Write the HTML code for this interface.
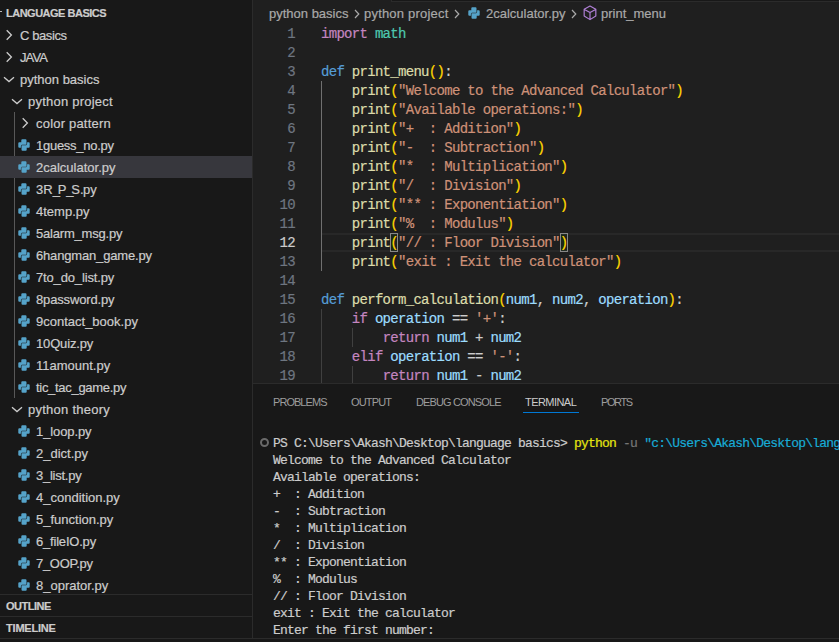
<!DOCTYPE html>
<html><head><meta charset="utf-8"><style>
*{margin:0;padding:0;box-sizing:border-box}
html,body{width:839px;height:642px;overflow:hidden;background:#181818}
body{position:relative;font-family:"Liberation Sans",sans-serif;color:#cccccc;-webkit-text-stroke:0.2px currentColor}
.abs{position:absolute}
#side{position:absolute;left:0;top:0;width:252px;height:638px;background:#181818;overflow:hidden}
#sideb{position:absolute;left:252px;top:0;width:1px;height:638px;background:#2b2b2b}
.hdr{position:absolute;left:6px;font-size:11px;font-weight:700;letter-spacing:-0.5px;line-height:22px;color:#cccccc;white-space:pre}
.row{position:absolute;left:0;width:252px;height:22px}
.row.sel{background:#37373d}
.row .lab{position:absolute;top:1px;font-size:13px;line-height:22px;white-space:pre;color:#cccccc}
.row .ic{position:absolute;width:16px;height:16px}
.pyi{display:block}
.chev{display:block}
.guide{position:absolute;left:14px;top:112px;width:1px;height:286px;background:#585858}
#ed{position:absolute;left:253px;top:0;width:586px;height:383px;background:#1f1f1f;overflow:hidden}
.ln{position:absolute;left:0;width:42px;text-align:right;font-family:"Liberation Mono",monospace;font-size:14px;line-height:19px;color:#6e7681;letter-spacing:-0.7px}
.ln.act{color:#cccccc}
.cl{position:absolute;left:68px;font-family:"Liberation Mono",monospace;font-size:14px;line-height:19px;color:#cccccc;white-space:pre;letter-spacing:-0.7px}
.kw{color:#c586c0} .mod{color:#4ec9b0} .def{color:#569cd6} .fn{color:#dcdcaa} .br{color:#ffd700} .str{color:#ce9178} .var{color:#9cdcfe}
.bc{position:absolute;top:2px;height:22px;font-size:13px;line-height:24px;color:#a9a9a9;white-space:pre}
.bci{position:absolute;top:5px}
#panel{position:absolute;left:253px;top:383px;width:586px;height:255px;background:#181818;border-top:1px solid #2b2b2b;overflow:hidden}
.tab{position:absolute;top:-1px;-webkit-text-stroke:0;font-size:11px;line-height:38px;color:#9d9d9d;white-space:pre}
.tl{position:absolute;left:20px;font-family:"Liberation Mono",monospace;font-size:13px;line-height:17px;color:#cccccc;white-space:pre;letter-spacing:-0.8px}
#bottom{position:absolute;left:0;top:638px;width:839px;height:1px;background:#2b2b2b}
</style></head><body>
<div id="side">
<div class="abs" style="left:0;top:11px;width:2px;height:1px;background:#b8b8b8"></div>
<div class="hdr" style="top:2px">LANGUAGE BASICS</div>
<div class="guide"></div>
<div class="row" style="top:24px"><div class="ic" style="left:1px;top:3px"><svg class="chev" width="16" height="16" viewBox="0 0 16 16"><path d="M5.7 3.3L10.4 8 5.7 12.7" fill="none" stroke="#cccccc" stroke-width="1.3"/></svg></div><div class="lab" style="left:20px;letter-spacing:-0.4px">C basics</div></div>
<div class="row" style="top:46px"><div class="ic" style="left:1px;top:3px"><svg class="chev" width="16" height="16" viewBox="0 0 16 16"><path d="M5.7 3.3L10.4 8 5.7 12.7" fill="none" stroke="#cccccc" stroke-width="1.3"/></svg></div><div class="lab" style="left:20px;letter-spacing:-0.9px">JAVA</div></div>
<div class="row" style="top:68px"><div class="ic" style="left:1px;top:3px"><svg class="chev" width="16" height="16" viewBox="0 0 16 16"><path d="M3 6.2L8 10.6 13 6.2" fill="none" stroke="#cccccc" stroke-width="1.3"/></svg></div><div class="lab" style="left:20px">python basics</div></div>
<div class="row" style="top:90px"><div class="ic" style="left:9px;top:3px"><svg class="chev" width="16" height="16" viewBox="0 0 16 16"><path d="M3 6.2L8 10.6 13 6.2" fill="none" stroke="#cccccc" stroke-width="1.3"/></svg></div><div class="lab" style="left:28px;letter-spacing:0.22px">python project</div></div>
<div class="row" style="top:112px"><div class="ic" style="left:17px;top:3px"><svg class="chev" width="16" height="16" viewBox="0 0 16 16"><path d="M5.7 3.3L10.4 8 5.7 12.7" fill="none" stroke="#cccccc" stroke-width="1.3"/></svg></div><div class="lab" style="left:36px;letter-spacing:0.2px">color pattern</div></div>
<div class="row" style="top:134px"><div class="ic" style="left:18px;top:5px"><svg class="pyi" width="12" height="12" viewBox="0 0 12 12"><g fill="#55a3c9"><path d="M4.3 0.3H7.5Q8.5 0.3 8.5 1.3V5.7H4.1Q2.9 5.7 2.9 6.9V8.7H1.3Q0.3 8.7 0.3 7.7V4.3Q0.3 3.3 1.3 3.3H3.3V1.3Q3.3 0.3 4.3 0.3Z"/><path d="M4.3 0.3H7.5Q8.5 0.3 8.5 1.3V5.7H4.1Q2.9 5.7 2.9 6.9V8.7H1.3Q0.3 8.7 0.3 7.7V4.3Q0.3 3.3 1.3 3.3H3.3V1.3Q3.3 0.3 4.3 0.3Z" transform="rotate(180 6 6)"/></g></svg></div><div class="lab" style="left:36px;letter-spacing:-0.27px">1guess_no.py</div></div>
<div class="row sel" style="top:156px"><div class="ic" style="left:18px;top:5px"><svg class="pyi" width="12" height="12" viewBox="0 0 12 12"><g fill="#55a3c9"><path d="M4.3 0.3H7.5Q8.5 0.3 8.5 1.3V5.7H4.1Q2.9 5.7 2.9 6.9V8.7H1.3Q0.3 8.7 0.3 7.7V4.3Q0.3 3.3 1.3 3.3H3.3V1.3Q3.3 0.3 4.3 0.3Z"/><path d="M4.3 0.3H7.5Q8.5 0.3 8.5 1.3V5.7H4.1Q2.9 5.7 2.9 6.9V8.7H1.3Q0.3 8.7 0.3 7.7V4.3Q0.3 3.3 1.3 3.3H3.3V1.3Q3.3 0.3 4.3 0.3Z" transform="rotate(180 6 6)"/></g></svg></div><div class="lab" style="left:36px">2calculator.py</div></div>
<div class="row" style="top:178px"><div class="ic" style="left:18px;top:5px"><svg class="pyi" width="12" height="12" viewBox="0 0 12 12"><g fill="#55a3c9"><path d="M4.3 0.3H7.5Q8.5 0.3 8.5 1.3V5.7H4.1Q2.9 5.7 2.9 6.9V8.7H1.3Q0.3 8.7 0.3 7.7V4.3Q0.3 3.3 1.3 3.3H3.3V1.3Q3.3 0.3 4.3 0.3Z"/><path d="M4.3 0.3H7.5Q8.5 0.3 8.5 1.3V5.7H4.1Q2.9 5.7 2.9 6.9V8.7H1.3Q0.3 8.7 0.3 7.7V4.3Q0.3 3.3 1.3 3.3H3.3V1.3Q3.3 0.3 4.3 0.3Z" transform="rotate(180 6 6)"/></g></svg></div><div class="lab" style="left:36px">3R<span style="letter-spacing:-2.2px">_</span>P<span style="letter-spacing:-2.2px">_</span>S<span style="letter-spacing:-0.6px">.</span>py</div></div>
<div class="row" style="top:200px"><div class="ic" style="left:18px;top:5px"><svg class="pyi" width="12" height="12" viewBox="0 0 12 12"><g fill="#55a3c9"><path d="M4.3 0.3H7.5Q8.5 0.3 8.5 1.3V5.7H4.1Q2.9 5.7 2.9 6.9V8.7H1.3Q0.3 8.7 0.3 7.7V4.3Q0.3 3.3 1.3 3.3H3.3V1.3Q3.3 0.3 4.3 0.3Z"/><path d="M4.3 0.3H7.5Q8.5 0.3 8.5 1.3V5.7H4.1Q2.9 5.7 2.9 6.9V8.7H1.3Q0.3 8.7 0.3 7.7V4.3Q0.3 3.3 1.3 3.3H3.3V1.3Q3.3 0.3 4.3 0.3Z" transform="rotate(180 6 6)"/></g></svg></div><div class="lab" style="left:36px">4temp.py</div></div>
<div class="row" style="top:222px"><div class="ic" style="left:18px;top:5px"><svg class="pyi" width="12" height="12" viewBox="0 0 12 12"><g fill="#55a3c9"><path d="M4.3 0.3H7.5Q8.5 0.3 8.5 1.3V5.7H4.1Q2.9 5.7 2.9 6.9V8.7H1.3Q0.3 8.7 0.3 7.7V4.3Q0.3 3.3 1.3 3.3H3.3V1.3Q3.3 0.3 4.3 0.3Z"/><path d="M4.3 0.3H7.5Q8.5 0.3 8.5 1.3V5.7H4.1Q2.9 5.7 2.9 6.9V8.7H1.3Q0.3 8.7 0.3 7.7V4.3Q0.3 3.3 1.3 3.3H3.3V1.3Q3.3 0.3 4.3 0.3Z" transform="rotate(180 6 6)"/></g></svg></div><div class="lab" style="left:36px;letter-spacing:-0.2px">5alarm_msg.py</div></div>
<div class="row" style="top:244px"><div class="ic" style="left:18px;top:5px"><svg class="pyi" width="12" height="12" viewBox="0 0 12 12"><g fill="#55a3c9"><path d="M4.3 0.3H7.5Q8.5 0.3 8.5 1.3V5.7H4.1Q2.9 5.7 2.9 6.9V8.7H1.3Q0.3 8.7 0.3 7.7V4.3Q0.3 3.3 1.3 3.3H3.3V1.3Q3.3 0.3 4.3 0.3Z"/><path d="M4.3 0.3H7.5Q8.5 0.3 8.5 1.3V5.7H4.1Q2.9 5.7 2.9 6.9V8.7H1.3Q0.3 8.7 0.3 7.7V4.3Q0.3 3.3 1.3 3.3H3.3V1.3Q3.3 0.3 4.3 0.3Z" transform="rotate(180 6 6)"/></g></svg></div><div class="lab" style="left:36px;letter-spacing:-0.17px">6hangman_game.py</div></div>
<div class="row" style="top:266px"><div class="ic" style="left:18px;top:5px"><svg class="pyi" width="12" height="12" viewBox="0 0 12 12"><g fill="#55a3c9"><path d="M4.3 0.3H7.5Q8.5 0.3 8.5 1.3V5.7H4.1Q2.9 5.7 2.9 6.9V8.7H1.3Q0.3 8.7 0.3 7.7V4.3Q0.3 3.3 1.3 3.3H3.3V1.3Q3.3 0.3 4.3 0.3Z"/><path d="M4.3 0.3H7.5Q8.5 0.3 8.5 1.3V5.7H4.1Q2.9 5.7 2.9 6.9V8.7H1.3Q0.3 8.7 0.3 7.7V4.3Q0.3 3.3 1.3 3.3H3.3V1.3Q3.3 0.3 4.3 0.3Z" transform="rotate(180 6 6)"/></g></svg></div><div class="lab" style="left:36px;letter-spacing:-0.15px">7to_do_list.py</div></div>
<div class="row" style="top:288px"><div class="ic" style="left:18px;top:5px"><svg class="pyi" width="12" height="12" viewBox="0 0 12 12"><g fill="#55a3c9"><path d="M4.3 0.3H7.5Q8.5 0.3 8.5 1.3V5.7H4.1Q2.9 5.7 2.9 6.9V8.7H1.3Q0.3 8.7 0.3 7.7V4.3Q0.3 3.3 1.3 3.3H3.3V1.3Q3.3 0.3 4.3 0.3Z"/><path d="M4.3 0.3H7.5Q8.5 0.3 8.5 1.3V5.7H4.1Q2.9 5.7 2.9 6.9V8.7H1.3Q0.3 8.7 0.3 7.7V4.3Q0.3 3.3 1.3 3.3H3.3V1.3Q3.3 0.3 4.3 0.3Z" transform="rotate(180 6 6)"/></g></svg></div><div class="lab" style="left:36px;letter-spacing:-0.15px">8password.py</div></div>
<div class="row" style="top:310px"><div class="ic" style="left:18px;top:5px"><svg class="pyi" width="12" height="12" viewBox="0 0 12 12"><g fill="#55a3c9"><path d="M4.3 0.3H7.5Q8.5 0.3 8.5 1.3V5.7H4.1Q2.9 5.7 2.9 6.9V8.7H1.3Q0.3 8.7 0.3 7.7V4.3Q0.3 3.3 1.3 3.3H3.3V1.3Q3.3 0.3 4.3 0.3Z"/><path d="M4.3 0.3H7.5Q8.5 0.3 8.5 1.3V5.7H4.1Q2.9 5.7 2.9 6.9V8.7H1.3Q0.3 8.7 0.3 7.7V4.3Q0.3 3.3 1.3 3.3H3.3V1.3Q3.3 0.3 4.3 0.3Z" transform="rotate(180 6 6)"/></g></svg></div><div class="lab" style="left:36px">9contact_book.py</div></div>
<div class="row" style="top:332px"><div class="ic" style="left:18px;top:5px"><svg class="pyi" width="12" height="12" viewBox="0 0 12 12"><g fill="#55a3c9"><path d="M4.3 0.3H7.5Q8.5 0.3 8.5 1.3V5.7H4.1Q2.9 5.7 2.9 6.9V8.7H1.3Q0.3 8.7 0.3 7.7V4.3Q0.3 3.3 1.3 3.3H3.3V1.3Q3.3 0.3 4.3 0.3Z"/><path d="M4.3 0.3H7.5Q8.5 0.3 8.5 1.3V5.7H4.1Q2.9 5.7 2.9 6.9V8.7H1.3Q0.3 8.7 0.3 7.7V4.3Q0.3 3.3 1.3 3.3H3.3V1.3Q3.3 0.3 4.3 0.3Z" transform="rotate(180 6 6)"/></g></svg></div><div class="lab" style="left:36px;letter-spacing:-0.15px">10Quiz.py</div></div>
<div class="row" style="top:354px"><div class="ic" style="left:18px;top:5px"><svg class="pyi" width="12" height="12" viewBox="0 0 12 12"><g fill="#55a3c9"><path d="M4.3 0.3H7.5Q8.5 0.3 8.5 1.3V5.7H4.1Q2.9 5.7 2.9 6.9V8.7H1.3Q0.3 8.7 0.3 7.7V4.3Q0.3 3.3 1.3 3.3H3.3V1.3Q3.3 0.3 4.3 0.3Z"/><path d="M4.3 0.3H7.5Q8.5 0.3 8.5 1.3V5.7H4.1Q2.9 5.7 2.9 6.9V8.7H1.3Q0.3 8.7 0.3 7.7V4.3Q0.3 3.3 1.3 3.3H3.3V1.3Q3.3 0.3 4.3 0.3Z" transform="rotate(180 6 6)"/></g></svg></div><div class="lab" style="left:36px">11amount.py</div></div>
<div class="row" style="top:376px"><div class="ic" style="left:18px;top:5px"><svg class="pyi" width="12" height="12" viewBox="0 0 12 12"><g fill="#55a3c9"><path d="M4.3 0.3H7.5Q8.5 0.3 8.5 1.3V5.7H4.1Q2.9 5.7 2.9 6.9V8.7H1.3Q0.3 8.7 0.3 7.7V4.3Q0.3 3.3 1.3 3.3H3.3V1.3Q3.3 0.3 4.3 0.3Z"/><path d="M4.3 0.3H7.5Q8.5 0.3 8.5 1.3V5.7H4.1Q2.9 5.7 2.9 6.9V8.7H1.3Q0.3 8.7 0.3 7.7V4.3Q0.3 3.3 1.3 3.3H3.3V1.3Q3.3 0.3 4.3 0.3Z" transform="rotate(180 6 6)"/></g></svg></div><div class="lab" style="left:36px;letter-spacing:-0.3px">tic_tac_game.py</div></div>
<div class="row" style="top:398px"><div class="ic" style="left:9px;top:3px"><svg class="chev" width="16" height="16" viewBox="0 0 16 16"><path d="M3 6.2L8 10.6 13 6.2" fill="none" stroke="#cccccc" stroke-width="1.3"/></svg></div><div class="lab" style="left:28px;letter-spacing:0.25px">python theory</div></div>
<div class="row" style="top:420px"><div class="ic" style="left:18px;top:5px"><svg class="pyi" width="12" height="12" viewBox="0 0 12 12"><g fill="#55a3c9"><path d="M4.3 0.3H7.5Q8.5 0.3 8.5 1.3V5.7H4.1Q2.9 5.7 2.9 6.9V8.7H1.3Q0.3 8.7 0.3 7.7V4.3Q0.3 3.3 1.3 3.3H3.3V1.3Q3.3 0.3 4.3 0.3Z"/><path d="M4.3 0.3H7.5Q8.5 0.3 8.5 1.3V5.7H4.1Q2.9 5.7 2.9 6.9V8.7H1.3Q0.3 8.7 0.3 7.7V4.3Q0.3 3.3 1.3 3.3H3.3V1.3Q3.3 0.3 4.3 0.3Z" transform="rotate(180 6 6)"/></g></svg></div><div class="lab" style="left:36px;letter-spacing:-0.1px">1_loop.py</div></div>
<div class="row" style="top:442px"><div class="ic" style="left:18px;top:5px"><svg class="pyi" width="12" height="12" viewBox="0 0 12 12"><g fill="#55a3c9"><path d="M4.3 0.3H7.5Q8.5 0.3 8.5 1.3V5.7H4.1Q2.9 5.7 2.9 6.9V8.7H1.3Q0.3 8.7 0.3 7.7V4.3Q0.3 3.3 1.3 3.3H3.3V1.3Q3.3 0.3 4.3 0.3Z"/><path d="M4.3 0.3H7.5Q8.5 0.3 8.5 1.3V5.7H4.1Q2.9 5.7 2.9 6.9V8.7H1.3Q0.3 8.7 0.3 7.7V4.3Q0.3 3.3 1.3 3.3H3.3V1.3Q3.3 0.3 4.3 0.3Z" transform="rotate(180 6 6)"/></g></svg></div><div class="lab" style="left:36px">2_dict.py</div></div>
<div class="row" style="top:464px"><div class="ic" style="left:18px;top:5px"><svg class="pyi" width="12" height="12" viewBox="0 0 12 12"><g fill="#55a3c9"><path d="M4.3 0.3H7.5Q8.5 0.3 8.5 1.3V5.7H4.1Q2.9 5.7 2.9 6.9V8.7H1.3Q0.3 8.7 0.3 7.7V4.3Q0.3 3.3 1.3 3.3H3.3V1.3Q3.3 0.3 4.3 0.3Z"/><path d="M4.3 0.3H7.5Q8.5 0.3 8.5 1.3V5.7H4.1Q2.9 5.7 2.9 6.9V8.7H1.3Q0.3 8.7 0.3 7.7V4.3Q0.3 3.3 1.3 3.3H3.3V1.3Q3.3 0.3 4.3 0.3Z" transform="rotate(180 6 6)"/></g></svg></div><div class="lab" style="left:36px;letter-spacing:-0.25px">3_list.py</div></div>
<div class="row" style="top:486px"><div class="ic" style="left:18px;top:5px"><svg class="pyi" width="12" height="12" viewBox="0 0 12 12"><g fill="#55a3c9"><path d="M4.3 0.3H7.5Q8.5 0.3 8.5 1.3V5.7H4.1Q2.9 5.7 2.9 6.9V8.7H1.3Q0.3 8.7 0.3 7.7V4.3Q0.3 3.3 1.3 3.3H3.3V1.3Q3.3 0.3 4.3 0.3Z"/><path d="M4.3 0.3H7.5Q8.5 0.3 8.5 1.3V5.7H4.1Q2.9 5.7 2.9 6.9V8.7H1.3Q0.3 8.7 0.3 7.7V4.3Q0.3 3.3 1.3 3.3H3.3V1.3Q3.3 0.3 4.3 0.3Z" transform="rotate(180 6 6)"/></g></svg></div><div class="lab" style="left:36px">4_condition.py</div></div>
<div class="row" style="top:508px"><div class="ic" style="left:18px;top:5px"><svg class="pyi" width="12" height="12" viewBox="0 0 12 12"><g fill="#55a3c9"><path d="M4.3 0.3H7.5Q8.5 0.3 8.5 1.3V5.7H4.1Q2.9 5.7 2.9 6.9V8.7H1.3Q0.3 8.7 0.3 7.7V4.3Q0.3 3.3 1.3 3.3H3.3V1.3Q3.3 0.3 4.3 0.3Z"/><path d="M4.3 0.3H7.5Q8.5 0.3 8.5 1.3V5.7H4.1Q2.9 5.7 2.9 6.9V8.7H1.3Q0.3 8.7 0.3 7.7V4.3Q0.3 3.3 1.3 3.3H3.3V1.3Q3.3 0.3 4.3 0.3Z" transform="rotate(180 6 6)"/></g></svg></div><div class="lab" style="left:36px">5_function.py</div></div>
<div class="row" style="top:530px"><div class="ic" style="left:18px;top:5px"><svg class="pyi" width="12" height="12" viewBox="0 0 12 12"><g fill="#55a3c9"><path d="M4.3 0.3H7.5Q8.5 0.3 8.5 1.3V5.7H4.1Q2.9 5.7 2.9 6.9V8.7H1.3Q0.3 8.7 0.3 7.7V4.3Q0.3 3.3 1.3 3.3H3.3V1.3Q3.3 0.3 4.3 0.3Z"/><path d="M4.3 0.3H7.5Q8.5 0.3 8.5 1.3V5.7H4.1Q2.9 5.7 2.9 6.9V8.7H1.3Q0.3 8.7 0.3 7.7V4.3Q0.3 3.3 1.3 3.3H3.3V1.3Q3.3 0.3 4.3 0.3Z" transform="rotate(180 6 6)"/></g></svg></div><div class="lab" style="left:36px;letter-spacing:-0.2px">6_fileIO.py</div></div>
<div class="row" style="top:552px"><div class="ic" style="left:18px;top:5px"><svg class="pyi" width="12" height="12" viewBox="0 0 12 12"><g fill="#55a3c9"><path d="M4.3 0.3H7.5Q8.5 0.3 8.5 1.3V5.7H4.1Q2.9 5.7 2.9 6.9V8.7H1.3Q0.3 8.7 0.3 7.7V4.3Q0.3 3.3 1.3 3.3H3.3V1.3Q3.3 0.3 4.3 0.3Z"/><path d="M4.3 0.3H7.5Q8.5 0.3 8.5 1.3V5.7H4.1Q2.9 5.7 2.9 6.9V8.7H1.3Q0.3 8.7 0.3 7.7V4.3Q0.3 3.3 1.3 3.3H3.3V1.3Q3.3 0.3 4.3 0.3Z" transform="rotate(180 6 6)"/></g></svg></div><div class="lab" style="left:36px;letter-spacing:-0.3px">7_OOP.py</div></div>
<div class="row" style="top:574px"><div class="ic" style="left:18px;top:5px"><svg class="pyi" width="12" height="12" viewBox="0 0 12 12"><g fill="#55a3c9"><path d="M4.3 0.3H7.5Q8.5 0.3 8.5 1.3V5.7H4.1Q2.9 5.7 2.9 6.9V8.7H1.3Q0.3 8.7 0.3 7.7V4.3Q0.3 3.3 1.3 3.3H3.3V1.3Q3.3 0.3 4.3 0.3Z"/><path d="M4.3 0.3H7.5Q8.5 0.3 8.5 1.3V5.7H4.1Q2.9 5.7 2.9 6.9V8.7H1.3Q0.3 8.7 0.3 7.7V4.3Q0.3 3.3 1.3 3.3H3.3V1.3Q3.3 0.3 4.3 0.3Z" transform="rotate(180 6 6)"/></g></svg></div><div class="lab" style="left:36px">8_oprator.py</div></div>
<div class="abs" style="left:0;top:594px;width:252px;height:1px;background:#2b2b2b"></div>
<div class="hdr" style="top:595px">OUTLINE</div>
<div class="abs" style="left:0;top:616px;width:252px;height:1px;background:#2b2b2b"></div>
<div class="hdr" style="top:617px;letter-spacing:-0.2px">TIMELINE</div>
</div>
<div id="sideb"></div>
<div id="ed">
<div class="abs" style="left:138px;top:0;width:448px;height:1px;background:#181818"></div>
<div class="abs" style="left:138px;top:1px;width:448px;height:1px;background:#2b2b2b"></div>
<div class="abs" style="left:138px;top:0;width:1px;height:1px;background:#2b2b2b"></div>
<div class="bc" style="left:16px">python basics</div>
<div class="bci" style="left:96px"><svg width="16" height="16" viewBox="0 0 16 16"><path d="M6 5L9.8 9 6 13" fill="none" stroke="#a9a9a9" stroke-width="1.2"/></svg></div>
<div class="bc" style="left:111px;letter-spacing:0.2px">python project</div>
<div class="bci" style="left:195.5px"><svg width="16" height="16" viewBox="0 0 16 16"><path d="M6 5L9.8 9 6 13" fill="none" stroke="#a9a9a9" stroke-width="1.2"/></svg></div>
<div class="bci" style="left:215px;top:7px"><svg class="pyi" width="12" height="12" viewBox="0 0 12 12"><g fill="#55a3c9"><path d="M4.3 0.3H7.5Q8.5 0.3 8.5 1.3V5.7H4.1Q2.9 5.7 2.9 6.9V8.7H1.3Q0.3 8.7 0.3 7.7V4.3Q0.3 3.3 1.3 3.3H3.3V1.3Q3.3 0.3 4.3 0.3Z"/><path d="M4.3 0.3H7.5Q8.5 0.3 8.5 1.3V5.7H4.1Q2.9 5.7 2.9 6.9V8.7H1.3Q0.3 8.7 0.3 7.7V4.3Q0.3 3.3 1.3 3.3H3.3V1.3Q3.3 0.3 4.3 0.3Z" transform="rotate(180 6 6)"/></g></svg></div>
<div class="bc" style="left:233px">2calculator.py</div>
<div class="bci" style="left:313px"><svg width="16" height="16" viewBox="0 0 16 16"><path d="M6 5L9.8 9 6 13" fill="none" stroke="#a9a9a9" stroke-width="1.2"/></svg></div>
<div class="bci" style="left:328.5px;top:5px;transform:scale(1.1)"><svg width="16" height="16" viewBox="0 0 16 16"><path d="M8 1.8l5.3 3v6.2L8 14.2 2.7 11V4.8z M2.9 4.9L8 7.8l5.1-2.9 M8 7.8v6.2" fill="none" stroke="#b180d7" stroke-width="1.05" stroke-linejoin="round"/></svg></div>
<div class="bc" style="left:348px">print_menu</div>
<div class="abs" style="left:69px;top:233px;width:517px;height:19px;border-top:2px solid #282828;border-bottom:2px solid #282828"></div>
<div class="abs" style="left:68px;top:271px;width:1px;height:0"></div>
<div class="abs" style="left:68px;top:81px;width:1px;height:190px;background:#707070"></div>
<div class="abs" style="left:68px;top:309px;width:1px;height:76px;background:#404040"></div>
<div class="abs" style="left:99px;top:328px;width:1px;height:19px;background:#404040"></div>
<div class="abs" style="left:99px;top:366px;width:1px;height:19px;background:#404040"></div>
<div class="abs" style="left:137px;top:233px;width:8px;height:19px;border:1px solid #888888;background:rgba(0,100,0,0.1)"></div>
<div class="abs" style="left:307px;top:233px;width:8px;height:19px;border:1px solid #888888;background:rgba(0,100,0,0.1)"></div>
<div class="ln" style="top:25px">1</div>
<div class="ln" style="top:44px">2</div>
<div class="ln" style="top:63px">3</div>
<div class="ln" style="top:82px">4</div>
<div class="ln" style="top:101px">5</div>
<div class="ln" style="top:120px">6</div>
<div class="ln" style="top:139px">7</div>
<div class="ln" style="top:158px">8</div>
<div class="ln" style="top:177px">9</div>
<div class="ln" style="top:196px">10</div>
<div class="ln" style="top:215px">11</div>
<div class="ln act" style="top:234px">12</div>
<div class="ln" style="top:253px">13</div>
<div class="ln" style="top:272px">14</div>
<div class="ln" style="top:291px">15</div>
<div class="ln" style="top:310px">16</div>
<div class="ln" style="top:329px">17</div>
<div class="ln" style="top:348px">18</div>
<div class="ln" style="top:367px">19</div>
<div class="cl" style="top:25px"><span class="kw">import</span> <span class="mod">math</span></div>
<div class="cl" style="top:44px"></div>
<div class="cl" style="top:63px"><span class="def">def</span> <span class="fn">print_menu</span><span class="br">()</span>:</div>
<div class="cl" style="top:82px">    <span class="fn">print</span><span class="br">(</span><span class="str">&quot;Welcome to the Advanced Calculator&quot;</span><span class="br">)</span></div>
<div class="cl" style="top:101px">    <span class="fn">print</span><span class="br">(</span><span class="str">&quot;Available operations:&quot;</span><span class="br">)</span></div>
<div class="cl" style="top:120px">    <span class="fn">print</span><span class="br">(</span><span class="str">&quot;+  : Addition&quot;</span><span class="br">)</span></div>
<div class="cl" style="top:139px">    <span class="fn">print</span><span class="br">(</span><span class="str">&quot;-  : Subtraction&quot;</span><span class="br">)</span></div>
<div class="cl" style="top:158px">    <span class="fn">print</span><span class="br">(</span><span class="str">&quot;*  : Multiplication&quot;</span><span class="br">)</span></div>
<div class="cl" style="top:177px">    <span class="fn">print</span><span class="br">(</span><span class="str">&quot;/  : Division&quot;</span><span class="br">)</span></div>
<div class="cl" style="top:196px">    <span class="fn">print</span><span class="br">(</span><span class="str">&quot;** : Exponentiation&quot;</span><span class="br">)</span></div>
<div class="cl" style="top:215px">    <span class="fn">print</span><span class="br">(</span><span class="str">&quot;%  : Modulus&quot;</span><span class="br">)</span></div>
<div class="cl" style="top:234px">    <span class="fn">print</span><span class="br">(</span><span class="str">&quot;// : Floor Division&quot;</span><span class="br">)</span></div>
<div class="cl" style="top:253px">    <span class="fn">print</span><span class="br">(</span><span class="str">&quot;exit : Exit the calculator&quot;</span><span class="br">)</span></div>
<div class="cl" style="top:272px"></div>
<div class="cl" style="top:291px"><span class="def">def</span> <span class="fn">perform_calculation</span><span class="br">(</span><span class="var">num1</span>, <span class="var">num2</span>, <span class="var">operation</span><span class="br">)</span>:</div>
<div class="cl" style="top:310px">    <span class="kw">if</span> <span class="var">operation</span> == <span class="str">&#x27;+&#x27;</span>:</div>
<div class="cl" style="top:329px">        <span class="kw">return</span> <span class="var">num1</span> + <span class="var">num2</span></div>
<div class="cl" style="top:348px">    <span class="kw">elif</span> <span class="var">operation</span> == <span class="str">&#x27;-&#x27;</span>:</div>
<div class="cl" style="top:367px">        <span class="kw">return</span> <span class="var">num1</span> - <span class="var">num2</span></div>
</div>
<div id="panel">
<div class="tab" style="left:20px;letter-spacing:-0.95px">PROBLEMS</div>
<div class="tab" style="left:98px;letter-spacing:-0.85px">OUTPUT</div>
<div class="tab" style="left:163px;letter-spacing:-0.87px">DEBUG CONSOLE</div>
<div class="tab" style="left:272px;color:#cccccc;letter-spacing:-0.55px">TERMINAL</div>
<div class="abs" style="left:270px;top:28px;width:56px;height:1px;background:#0078d4"></div>
<div class="tab" style="left:348px;letter-spacing:-1.4px">PORTS</div>
<div class="abs" style="left:7px;top:54px;width:9px;height:9px;border-radius:50%;border:2px solid #6a6a6a"></div>
<div class="tl" style="top:51px">PS C:\Users\Akash\Desktop\language basics&gt; <span style="color:#e5e510">python</span> <span style="color:#767676">-u</span> <span style="color:#17acd6">"c:\Users\Akash\Desktop\language basics\python basics\python project\2calculator.py"</span></div>
<div class="tl" style="top:68px">Welcome to the Advanced Calculator</div>
<div class="tl" style="top:85px">Available operations:</div>
<div class="tl" style="top:102px">+  : Addition</div>
<div class="tl" style="top:119px">-  : Subtraction</div>
<div class="tl" style="top:136px">*  : Multiplication</div>
<div class="tl" style="top:153px">/  : Division</div>
<div class="tl" style="top:170px">** : Exponentiation</div>
<div class="tl" style="top:187px">%  : Modulus</div>
<div class="tl" style="top:204px">// : Floor Division</div>
<div class="tl" style="top:221px">exit : Exit the calculator</div>
<div class="tl" style="top:238px">Enter the first number:</div>
</div>
<div id="bottom"></div>
</body></html>
